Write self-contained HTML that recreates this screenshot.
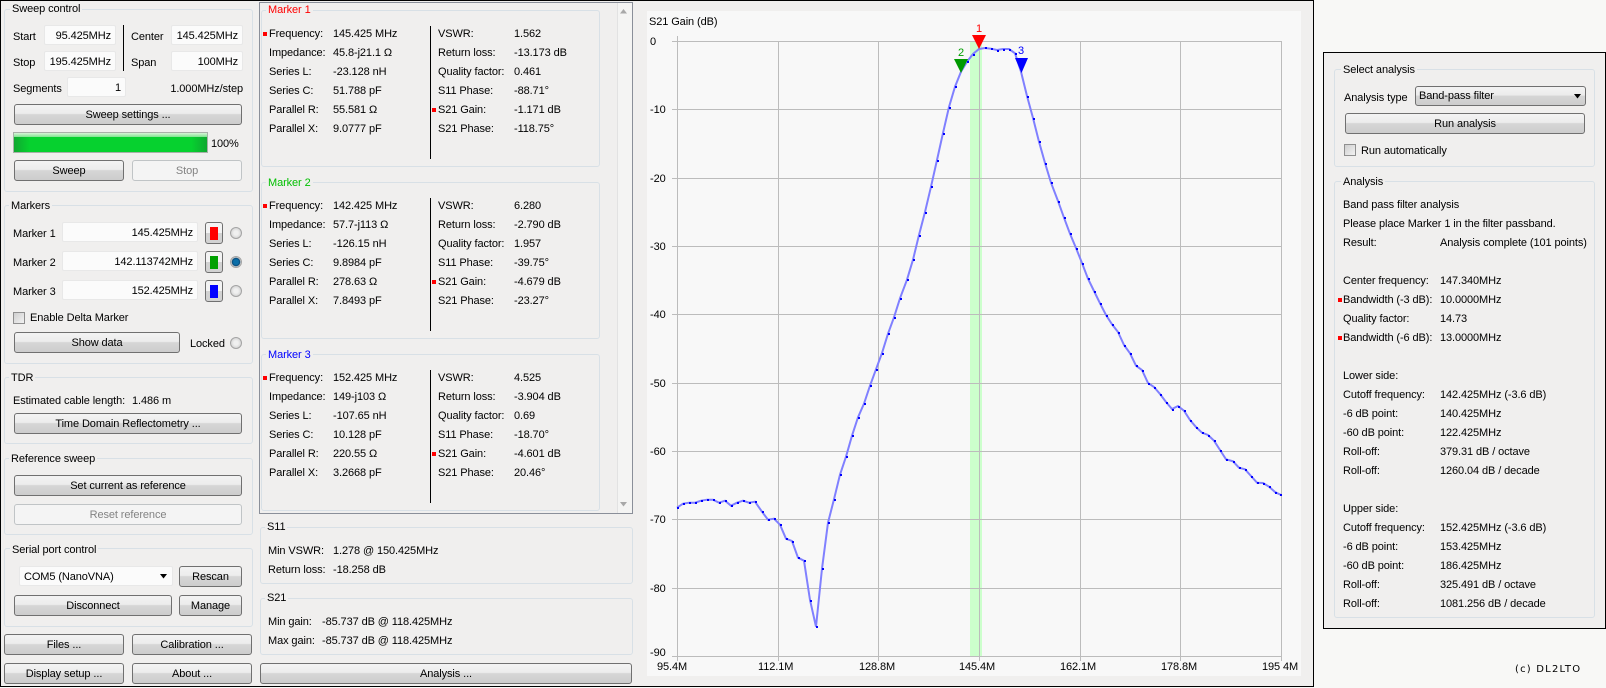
<!DOCTYPE html>
<html><head><meta charset="utf-8">
<style>
html,body{margin:0;padding:0;}
body{width:1606px;height:688px;position:relative;overflow:hidden;background:#f8f8f6;font-family:"Liberation Sans",Arial,sans-serif;font-size:11px;letter-spacing:-0.1px;color:#000;}
div,span{position:absolute;box-sizing:border-box;}
.win{left:0;top:0;width:1314px;height:687px;border:1px solid #000;background:#f0efee;}
.abs{left:0;top:0;width:0;height:0;}
.g{border:1px solid #d8e0e6;border-radius:3px;}
.gt{white-space:nowrap;line-height:14px;height:14px;background:#f0efee;padding:0 2px;margin-left:-2px;}
.t{white-space:nowrap;line-height:14px;height:14px;margin-top:1px;}
.r{text-align:right;}
.b{border:1px solid #707070;border-radius:3px;text-align:center;white-space:nowrap;background:linear-gradient(#f3f3f3 0,#ececec 45%,#d6d6d6 50%,#cdcdcd 100%);line-height:20px;height:21px;}
.d{border:1px solid #c0c4c6;color:#838383;background:#f4f4f4;}
.i{border:1px solid #e8e8e8;border-radius:2px;background:#fbfbfb;text-align:right;padding-right:4px;line-height:20px;height:20px;white-space:nowrap;}
.rad{width:12px;height:12px;border-radius:50%;border:1px solid #a4a4a4;background:radial-gradient(#f0f0f0 30%,#c4c4c4 100%);}
.cb{width:12px;height:12px;border:1px solid #8f8f8f;background:linear-gradient(135deg,#cfcfcf,#f2f2f2);}
.cbtn{width:18px;height:22px;border:1px solid #707070;border-radius:3px;background:linear-gradient(#f3f3f3 50%,#d2d2d2 50%);}
.cbtn span{left:4px;top:4px;width:8px;height:13px;}
.bl{width:4px;height:4px;background:#f00;}
.m{left:0;width:0;height:0;}
.ax{white-space:nowrap;line-height:14px;height:14px;}
.y{margin-top:1px;}
</style></head><body>
<div class="win"></div>
<div class="abs">

<!-- Sweep control -->
<div class="g" style="left:4px;top:9px;width:249px;height:183px"></div>
<div class="t gt" style="left:12px;top:2px;margin-top:0">Sweep control</div>
<div class="t" style="left:13px;top:29px">Start</div>
<div class="i" style="left:44px;top:25px;width:72px">95.425MHz</div>
<div class="t" style="left:13px;top:55px">Stop</div>
<div class="i" style="left:44px;top:51px;width:72px">195.425MHz</div>
<div style="left:123px;top:25px;width:1px;height:46px;background:#000"></div>
<div class="t" style="left:131px;top:29px">Center</div>
<div class="i" style="left:171px;top:25px;width:72px">145.425MHz</div>
<div class="t" style="left:131px;top:55px">Span</div>
<div class="i" style="left:171px;top:51px;width:72px">100MHz</div>
<div class="t" style="left:13px;top:81px">Segments</div>
<div class="i" style="left:67px;top:77px;width:59px">1</div>
<div class="t r" style="left:142px;width:101px;top:81px">1.000MHz/step</div>
<div class="b" style="left:14px;top:104px;width:228px">Sweep settings ...</div>
<div style="left:13px;top:132px;width:195px;height:21px;border:1px solid #a8b0a8;background:linear-gradient(90deg,#10a830 0,#06d12f 8%,#06d12f 92%,#10a830 100%)"><span style="left:0;top:0;width:193px;height:4px;background:linear-gradient(#d8f4d8,#80e490)"></span></div>
<div class="t" style="left:211px;top:136px">100%</div>
<div class="b" style="left:14px;top:160px;width:110px">Sweep</div>
<div class="b d" style="left:132px;top:160px;width:110px">Stop</div>

<!-- Markers -->
<div class="g" style="left:4px;top:205px;width:249px;height:159px"></div>
<div class="t gt" style="left:11px;top:198px">Markers</div>
<div class="t" style="left:13px;top:226px">Marker 1</div>
<div class="i" style="left:62px;top:222px;width:136px">145.425MHz</div>
<div class="cbtn" style="left:205px;top:222px"><span style="background:#f00"></span></div>
<div class="rad" style="left:230px;top:227px"></div>
<div class="t" style="left:13px;top:255px">Marker 2</div>
<div class="i" style="left:62px;top:251px;width:136px">142.113742MHz</div>
<div class="cbtn" style="left:205px;top:251px"><span style="background:#00a000"></span></div>
<div class="rad" style="left:230px;top:256px;background:radial-gradient(#0a6ea8 35%,#0a4a78 55%,#d0d0d0 65%)"></div>
<div class="t" style="left:13px;top:284px">Marker 3</div>
<div class="i" style="left:62px;top:280px;width:136px">152.425MHz</div>
<div class="cbtn" style="left:205px;top:280px"><span style="background:#00f"></span></div>
<div class="rad" style="left:230px;top:285px"></div>
<div class="cb" style="left:13px;top:312px"></div>
<div class="t" style="left:30px;top:310px">Enable Delta Marker</div>
<div class="b" style="left:14px;top:332px;width:166px">Show data</div>
<div class="t" style="left:190px;top:336px">Locked</div>
<div class="rad" style="left:230px;top:337px"></div>

<!-- TDR -->
<div class="g" style="left:4px;top:377px;width:249px;height:67px"></div>
<div class="t gt" style="left:11px;top:370px">TDR</div>
<div class="t" style="left:13px;top:393px">Estimated cable length:</div>
<div class="t" style="left:132px;top:393px">1.486 m</div>
<div class="b" style="left:14px;top:413px;width:228px">Time Domain Reflectometry ...</div>

<!-- Reference -->
<div class="g" style="left:4px;top:458px;width:249px;height:77px"></div>
<div class="t gt" style="left:11px;top:451px">Reference sweep</div>
<div class="b" style="left:14px;top:475px;width:228px">Set current as reference</div>
<div class="b d" style="left:14px;top:504px;width:228px">Reset reference</div>

<!-- Serial -->
<div class="g" style="left:4px;top:548px;width:249px;height:79px"></div>
<div class="t gt" style="left:12px;top:542px">Serial port control</div>
<div class="i" style="left:19px;top:566px;width:154px;text-align:left;padding-left:4px">COM5 (NanoVNA)</div>
<svg style="position:absolute;left:160px;top:574px" width="8" height="5"><path d="M0 0h7L3.500 4.500z" fill="#000"/></svg>
<div class="b" style="left:179px;top:566px;width:63px">Rescan</div>
<div class="b" style="left:14px;top:595px;width:158px">Disconnect</div>
<div class="b" style="left:179px;top:595px;width:63px">Manage</div>

<div class="b" style="left:4px;top:634px;width:120px">Files ...</div>
<div class="b" style="left:132px;top:634px;width:120px">Calibration ...</div>
<div class="b" style="left:4px;top:663px;width:120px">Display setup ...</div>
<div class="b" style="left:132px;top:663px;width:120px">About ...</div>

<!-- Scroll area -->
<div style="left:259px;top:2px;width:374px;height:512px;border:1px solid #8a8f99"></div>
<div style="left:617px;top:3px;width:15px;height:510px;background:#f4f4f3;border-left:1px solid #e2e2e2"></div>
<svg style="position:absolute;left:620px;top:9px" width="8" height="5"><path d="M0 4.500h7L3.500 0z" fill="#a8a8a8"/></svg>
<svg style="position:absolute;left:620px;top:502px" width="8" height="5"><path d="M0 0h7L3.500 4.500z" fill="#a8a8a8"/></svg>

<!-- Marker 1 -->
<div class="m" style="top:0">
<div class="g" style="left:261px;top:10px;width:339px;height:157px"></div>
<div class="t gt" style="left:268px;top:3px;margin-top:0;color:#f00">Marker 1</div>
<div class="bl" style="left:263px;top:32px"></div>
<div class="t" style="left:269px;top:26px">Frequency:</div><div class="t" style="left:333px;top:26px">145.425 MHz</div>
<div class="t" style="left:269px;top:45px">Impedance:</div><div class="t" style="left:333px;top:45px">45.8-j21.1 Ω</div>
<div class="t" style="left:269px;top:64px">Series L:</div><div class="t" style="left:333px;top:64px">-23.128 nH</div>
<div class="t" style="left:269px;top:83px">Series C:</div><div class="t" style="left:333px;top:83px">51.788 pF</div>
<div class="t" style="left:269px;top:102px">Parallel R:</div><div class="t" style="left:333px;top:102px">55.581 Ω</div>
<div class="t" style="left:269px;top:121px">Parallel X:</div><div class="t" style="left:333px;top:121px">9.0777 pF</div>
<div style="left:430px;top:26px;width:1px;height:133px;background:#000"></div>
<div class="bl" style="left:432px;top:108px"></div>
<div class="t" style="left:438px;top:26px">VSWR:</div><div class="t" style="left:514px;top:26px">1.562</div>
<div class="t" style="left:438px;top:45px">Return loss:</div><div class="t" style="left:514px;top:45px">-13.173 dB</div>
<div class="t" style="left:438px;top:64px">Quality factor:</div><div class="t" style="left:514px;top:64px">0.461</div>
<div class="t" style="left:438px;top:83px">S11 Phase:</div><div class="t" style="left:514px;top:83px">-88.71°</div>
<div class="t" style="left:438px;top:102px">S21 Gain:</div><div class="t" style="left:514px;top:102px">-1.171 dB</div>
<div class="t" style="left:438px;top:121px">S21 Phase:</div><div class="t" style="left:514px;top:121px">-118.75°</div>
</div>

<!-- Marker 2 -->
<div class="m" style="top:172px">
<div class="g" style="left:261px;top:10px;width:339px;height:157px"></div>
<div class="t gt" style="left:268px;top:3px;color:#00c000">Marker 2</div>
<div class="bl" style="left:263px;top:32px"></div>
<div class="t" style="left:269px;top:26px">Frequency:</div><div class="t" style="left:333px;top:26px">142.425 MHz</div>
<div class="t" style="left:269px;top:45px">Impedance:</div><div class="t" style="left:333px;top:45px">57.7-j113 Ω</div>
<div class="t" style="left:269px;top:64px">Series L:</div><div class="t" style="left:333px;top:64px">-126.15 nH</div>
<div class="t" style="left:269px;top:83px">Series C:</div><div class="t" style="left:333px;top:83px">9.8984 pF</div>
<div class="t" style="left:269px;top:102px">Parallel R:</div><div class="t" style="left:333px;top:102px">278.63 Ω</div>
<div class="t" style="left:269px;top:121px">Parallel X:</div><div class="t" style="left:333px;top:121px">7.8493 pF</div>
<div style="left:430px;top:26px;width:1px;height:133px;background:#000"></div>
<div class="bl" style="left:432px;top:108px"></div>
<div class="t" style="left:438px;top:26px">VSWR:</div><div class="t" style="left:514px;top:26px">6.280</div>
<div class="t" style="left:438px;top:45px">Return loss:</div><div class="t" style="left:514px;top:45px">-2.790 dB</div>
<div class="t" style="left:438px;top:64px">Quality factor:</div><div class="t" style="left:514px;top:64px">1.957</div>
<div class="t" style="left:438px;top:83px">S11 Phase:</div><div class="t" style="left:514px;top:83px">-39.75°</div>
<div class="t" style="left:438px;top:102px">S21 Gain:</div><div class="t" style="left:514px;top:102px">-4.679 dB</div>
<div class="t" style="left:438px;top:121px">S21 Phase:</div><div class="t" style="left:514px;top:121px">-23.27°</div>
</div>

<!-- Marker 3 -->
<div class="m" style="top:344px">
<div class="g" style="left:261px;top:10px;width:339px;height:157px"></div>
<div class="t gt" style="left:268px;top:3px;color:#0000ff">Marker 3</div>
<div class="bl" style="left:263px;top:32px"></div>
<div class="t" style="left:269px;top:26px">Frequency:</div><div class="t" style="left:333px;top:26px">152.425 MHz</div>
<div class="t" style="left:269px;top:45px">Impedance:</div><div class="t" style="left:333px;top:45px">149-j103 Ω</div>
<div class="t" style="left:269px;top:64px">Series L:</div><div class="t" style="left:333px;top:64px">-107.65 nH</div>
<div class="t" style="left:269px;top:83px">Series C:</div><div class="t" style="left:333px;top:83px">10.128 pF</div>
<div class="t" style="left:269px;top:102px">Parallel R:</div><div class="t" style="left:333px;top:102px">220.55 Ω</div>
<div class="t" style="left:269px;top:121px">Parallel X:</div><div class="t" style="left:333px;top:121px">3.2668 pF</div>
<div style="left:430px;top:26px;width:1px;height:133px;background:#000"></div>
<div class="bl" style="left:432px;top:108px"></div>
<div class="t" style="left:438px;top:26px">VSWR:</div><div class="t" style="left:514px;top:26px">4.525</div>
<div class="t" style="left:438px;top:45px">Return loss:</div><div class="t" style="left:514px;top:45px">-3.904 dB</div>
<div class="t" style="left:438px;top:64px">Quality factor:</div><div class="t" style="left:514px;top:64px">0.69</div>
<div class="t" style="left:438px;top:83px">S11 Phase:</div><div class="t" style="left:514px;top:83px">-18.70°</div>
<div class="t" style="left:438px;top:102px">S21 Gain:</div><div class="t" style="left:514px;top:102px">-4.601 dB</div>
<div class="t" style="left:438px;top:121px">S21 Phase:</div><div class="t" style="left:514px;top:121px">20.46°</div>
</div>

<!-- S11 / S21 -->
<div class="g" style="left:260px;top:527px;width:373px;height:57px"></div>
<div class="t gt" style="left:267px;top:520px;margin-top:0">S11</div>
<div class="t" style="left:268px;top:543px">Min VSWR:</div><div class="t" style="left:333px;top:543px">1.278 @ 150.425MHz</div>
<div class="t" style="left:268px;top:562px">Return loss:</div><div class="t" style="left:333px;top:562px">-18.258 dB</div>
<div class="g" style="left:260px;top:598px;width:373px;height:57px"></div>
<div class="t gt" style="left:267px;top:591px;margin-top:0">S21</div>
<div class="t" style="left:268px;top:614px">Min gain:</div><div class="t" style="left:322px;top:614px">-85.737 dB @ 118.425MHz</div>
<div class="t" style="left:268px;top:633px">Max gain:</div><div class="t" style="left:322px;top:633px">-85.737 dB @ 118.425MHz</div>
<div class="b" style="left:260px;top:663px;width:372px">Analysis ...</div>

<!-- Chart -->
<div style="left:647px;top:11px;width:654px;height:665px;background:#f8f8f8"></div>
<svg style="position:absolute;left:0;top:0" width="1606" height="688" shape-rendering="crispEdges">
<rect x="970" y="41" width="12" height="615" fill="#ccffcc"/>
<g stroke="#bcbcbc" stroke-width="1" fill="none">
<path d="M672 41.500H1281M672 109.500H1281M672 178.500H1281M672 246.500H1281M672 314.500H1281M672 383.500H1281M672 451.500H1281M672 519.500H1281M672 588.500H1281M672 656.500H1281"/>
<path d="M677.500 36V661M778.500 41V661M878.500 41V661M979.500 41V661M1080.500 41V661M1180.500 41V661M1281.500 41V661"/>
</g>
<polyline shape-rendering="auto" fill="none" stroke="#8080ff" stroke-width="2" points="677,507.700 683,503.700 689,502.700 695,502.700 701,500.700 707,499.700 713,499.700 719,502.700 725,500.700 731,505.700 737,502.700 743,500.700 749,502.700 755,501.700 762,511.700 768,519.700 774,518.700 780,524.700 786,538.700 792,541 798,557.700 804,560.700 810,600 816,626.700 822,568.700 828,522.700 834,499.300 840,474.700 846,456.700 852,435.700 858,417.300 864,403.700 870,385.700 876,369.300 882,353 888,333.700 894,317.300 900,298.300 907,279.700 913,259.700 919,235 925,212 931,186.700 937,160 943,133 949,107 955,86.700 961,71.700 967,61.700 973,54 979,49 985,48 991,48.700 997,50 1003,49 1009,49 1015,53.300 1021,71.700 1027,96 1033,118 1039,141.700 1045,163 1051,182.700 1058,201 1064,217.700 1070,233.700 1076,248 1082,263 1088,278.700 1094,291 1100,303.300 1106,315 1112,324.300 1118,332 1124,345 1130,353.300 1136,365.700 1142,370 1148,383 1154,387 1160,394 1166,402 1172,409 1178,406 1184,410.700 1190,420 1196,427 1202,432.700 1208,435 1214,440.700 1220,450 1226,459.300 1233,461.300 1239,467.700 1245,469.300 1251,476 1257,482.700 1263,483 1269,486.700 1275,492 1281,495"/>
<path fill="#0000ff" d="M677 507h2v2h-2zM683 503h2v2h-2zM689 502h2v2h-2zM695 502h2v2h-2zM701 500h2v2h-2zM707 499h2v2h-2zM713 499h2v2h-2zM719 502h2v2h-2zM725 500h2v2h-2zM731 505h2v2h-2zM737 502h2v2h-2zM743 500h2v2h-2zM749 502h2v2h-2zM755 501h2v2h-2zM762 511h2v2h-2zM768 519h2v2h-2zM774 518h2v2h-2zM780 524h2v2h-2zM786 538h2v2h-2zM792 541h2v2h-2zM798 557h2v2h-2zM804 560h2v2h-2zM810 600h2v2h-2zM816 626h2v2h-2zM822 568h2v2h-2zM828 522h2v2h-2zM834 499h2v2h-2zM840 474h2v2h-2zM846 456h2v2h-2zM852 435h2v2h-2zM858 417h2v2h-2zM864 403h2v2h-2zM870 385h2v2h-2zM876 369h2v2h-2zM882 353h2v2h-2zM888 333h2v2h-2zM894 317h2v2h-2zM900 298h2v2h-2zM907 279h2v2h-2zM913 259h2v2h-2zM919 235h2v2h-2zM925 212h2v2h-2zM931 186h2v2h-2zM937 160h2v2h-2zM943 133h2v2h-2zM949 107h2v2h-2zM955 86h2v2h-2zM967 61h2v2h-2zM973 54h2v2h-2zM985 47h2v2h-2zM991 48h2v2h-2zM997 50h2v2h-2zM1003 49h2v2h-2zM1009 49h2v2h-2zM1015 53h2v2h-2zM1027 96h2v2h-2zM1033 118h2v2h-2zM1039 141h2v2h-2zM1045 163h2v2h-2zM1051 182h2v2h-2zM1058 201h2v2h-2zM1064 217h2v2h-2zM1070 233h2v2h-2zM1076 248h2v2h-2zM1082 263h2v2h-2zM1088 278h2v2h-2zM1094 291h2v2h-2zM1100 303h2v2h-2zM1106 315h2v2h-2zM1112 324h2v2h-2zM1118 332h2v2h-2zM1124 345h2v2h-2zM1130 353h2v2h-2zM1136 365h2v2h-2zM1142 370h2v2h-2zM1148 383h2v2h-2zM1154 387h2v2h-2zM1160 394h2v2h-2zM1166 402h2v2h-2zM1172 409h2v2h-2zM1178 406h2v2h-2zM1184 410h2v2h-2zM1190 420h2v2h-2zM1196 427h2v2h-2zM1202 432h2v2h-2zM1208 435h2v2h-2zM1214 440h2v2h-2zM1220 450h2v2h-2zM1226 459h2v2h-2zM1233 461h2v2h-2zM1239 467h2v2h-2zM1245 469h2v2h-2zM1251 476h2v2h-2zM1257 482h2v2h-2zM1263 483h2v2h-2zM1269 486h2v2h-2zM1275 492h2v2h-2zM1280 494h2v2h-2z"/>
<path fill="#ff0000" d="M972 35H986L979 49z" shape-rendering="auto"/>
<path fill="#009900" d="M954 59H968L961 73z" shape-rendering="auto"/>
<path fill="#0000ff" d="M1015 58H1028L1021.500 73z" shape-rendering="auto"/>
</svg>
<div class="t" style="left:649px;top:15px;margin-top:0">S21 Gain (dB)</div>
<div class="ax y" style="left:650px;top:34px">0</div>
<div class="ax y" style="left:650px;top:102px">-10</div>
<div class="ax y" style="left:650px;top:171px">-20</div>
<div class="ax y" style="left:650px;top:239px">-30</div>
<div class="ax y" style="left:650px;top:307px">-40</div>
<div class="ax y" style="left:650px;top:376px">-50</div>
<div class="ax y" style="left:650px;top:444px">-60</div>
<div class="ax y" style="left:650px;top:512px">-70</div>
<div class="ax y" style="left:650px;top:581px">-80</div>
<div class="ax y" style="left:650px;top:645px">-90</div>
<div class="ax" style="left:657px;top:660px">95.4M</div>
<div class="ax" style="left:758px;top:660px">112.1M</div>
<div class="ax" style="left:859px;top:660px">128.8M</div>
<div class="ax" style="left:959px;top:660px">145.4M</div>
<div class="ax" style="left:1060px;top:660px">162.1M</div>
<div class="ax" style="left:1161px;top:660px">178.8M</div>
<div class="ax" style="left:1262px;top:660px">195 4M</div>
<div class="t" style="left:976px;top:21px;color:#f00">1</div>
<div class="t" style="left:958px;top:45px;color:#00a000">2</div>
<div class="t" style="left:1018px;top:44px;margin-top:0;color:#00f">3</div>

<!-- Analysis panel -->
<div style="left:1323px;top:52px;width:283px;height:577px;border:1px solid #000;background:#f0efee"></div>
<div class="g" style="left:1334px;top:69px;width:261px;height:98px"></div>
<div class="t gt" style="left:1343px;top:63px;margin-top:0">Select analysis</div>
<div class="t" style="left:1344px;top:90px">Analysis type</div>
<div class="b" style="left:1415px;top:86px;width:171px;height:20px;line-height:19px;text-align:left;padding-left:3px">Band-pass filter</div>
<svg style="position:absolute;left:1574px;top:94px" width="8" height="5"><path d="M0 0h7L3.500 4.500z" fill="#000"/></svg>
<div class="b" style="left:1345px;top:113px;width:240px">Run analysis</div>
<div class="cb" style="left:1344px;top:144px"></div>
<div class="t" style="left:1361px;top:143px">Run automatically</div>
<div class="g" style="left:1334px;top:181px;width:261px;height:437px"></div>
<div class="t gt" style="left:1343px;top:174px">Analysis</div>
<div class="t" style="left:1343px;top:197px">Band pass filter analysis</div>
<div class="t" style="left:1343px;top:216px">Please place Marker 1 in the filter passband.</div>
<div class="t" style="left:1343px;top:235px">Result:</div><div class="t" style="left:1440px;top:235px">Analysis complete (101 points)</div>
<div class="t" style="left:1343px;top:273px">Center frequency:</div><div class="t" style="left:1440px;top:273px">147.340MHz</div>
<div class="bl" style="left:1338px;top:298px"></div>
<div class="t" style="left:1343px;top:292px">Bandwidth (-3 dB):</div><div class="t" style="left:1440px;top:292px">10.0000MHz</div>
<div class="t" style="left:1343px;top:311px">Quality factor:</div><div class="t" style="left:1440px;top:311px">14.73</div>
<div class="bl" style="left:1338px;top:336px"></div>
<div class="t" style="left:1343px;top:330px">Bandwidth (-6 dB):</div><div class="t" style="left:1440px;top:330px">13.0000MHz</div>
<div class="t" style="left:1343px;top:368px">Lower side:</div>
<div class="t" style="left:1343px;top:387px">Cutoff frequency:</div><div class="t" style="left:1440px;top:387px">142.425MHz (-3.6 dB)</div>
<div class="t" style="left:1343px;top:406px">-6 dB point:</div><div class="t" style="left:1440px;top:406px">140.425MHz</div>
<div class="t" style="left:1343px;top:425px">-60 dB point:</div><div class="t" style="left:1440px;top:425px">122.425MHz</div>
<div class="t" style="left:1343px;top:444px">Roll-off:</div><div class="t" style="left:1440px;top:444px">379.31 dB / octave</div>
<div class="t" style="left:1343px;top:463px">Roll-off:</div><div class="t" style="left:1440px;top:463px">1260.04 dB / decade</div>
<div class="t" style="left:1343px;top:501px">Upper side:</div>
<div class="t" style="left:1343px;top:520px">Cutoff frequency:</div><div class="t" style="left:1440px;top:520px">152.425MHz (-3.6 dB)</div>
<div class="t" style="left:1343px;top:539px">-6 dB point:</div><div class="t" style="left:1440px;top:539px">153.425MHz</div>
<div class="t" style="left:1343px;top:558px">-60 dB point:</div><div class="t" style="left:1440px;top:558px">186.425MHz</div>
<div class="t" style="left:1343px;top:577px">Roll-off:</div><div class="t" style="left:1440px;top:577px">325.491 dB / octave</div>
<div class="t" style="left:1343px;top:596px">Roll-off:</div><div class="t" style="left:1440px;top:596px">1081.256 dB / decade</div>
<div class="t" style="left:1515px;top:663px;margin-top:0;font-family:'DejaVu Sans',sans-serif;font-size:10px;letter-spacing:1.2px">(c) DL2LTO</div>
</div>
</body></html>
